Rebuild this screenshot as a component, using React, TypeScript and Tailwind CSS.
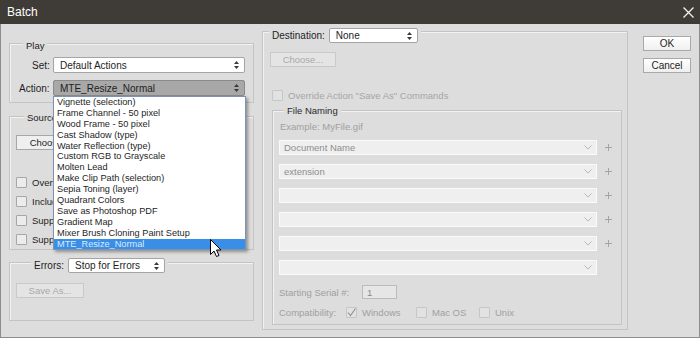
import React from "react";

const actions = [
  "Vignette (selection)",
  "Frame Channel - 50 pixel",
  "Wood Frame - 50 pixel",
  "Cast Shadow (type)",
  "Water Reflection (type)",
  "Custom RGB to Grayscale",
  "Molten Lead",
  "Make Clip Path (selection)",
  "Sepia Toning (layer)",
  "Quadrant Colors",
  "Save as Photoshop PDF",
  "Gradient Map",
  "Mixer Brush Cloning Paint Setup",
  "MTE_Resize_Normal",
];

function UpDown() {
  return (
    <svg width="5" height="8" viewBox="0 0 5 8">
      <path d="M2.5 0 L5 3 H0 Z M0 5 H5 L2.5 8 Z" fill="#3a3a3a" />
    </svg>
  );
}

function Chevron() {
  return (
    <svg width="8" height="5" viewBox="0 0 8 5">
      <path d="M0.5 0.5 L4 4 L7.5 0.5" stroke="#b8b8b8" fill="none" />
    </svg>
  );
}

function Plus() {
  return (
    <svg width="7" height="7" viewBox="0 0 7 7">
      <path d="M3.5 0 V7 M0 3.5 H7" stroke="#a4a4a4" />
    </svg>
  );
}

function Group({
  legend,
  legendClass,
  className,
  children,
}: {
  legend: React.ReactNode;
  legendClass: string;
  className: string;
  children?: React.ReactNode;
}) {
  return (
    <div className={`border border-[#c4c4c4] shadow-[inset_1px_1px_0_#f2f2f2] ${className}`}>
      <div className={`flex w-fit items-center gap-[4px] bg-[#dddddd] px-[3px] ${legendClass}`}>{legend}</div>
      {children}
    </div>
  );
}

function Select({ text, className }: { text: string; className: string }) {
  return (
    <div
      className={`flex items-center justify-between rounded-[2px] border border-[#a4a4a4] bg-white pl-[6px] pr-[5px] text-[10px] ${className}`}
    >
      <span>{text}</span>
      <UpDown />
    </div>
  );
}

function Box({ dim }: { dim?: boolean }) {
  return (
    <div
      className={`h-[11px] w-[11px] shrink-0 rounded-[1px] border ${dim ? "border-[#c6c6c6] bg-[#e2e2e2]" : "border-[#a6a6a6] bg-[#ececec]"}`}
    />
  );
}

function DimButton({ text, className }: { text: string; className: string }) {
  return (
    <div
      className={`flex h-[15px] items-center justify-center border border-[#c9c9c9] bg-[#e4e4e4] text-[#a9a9a9] ${className}`}
    >
      {text}
    </div>
  );
}

function NameRow({ text, plus }: { text: string; plus: boolean }) {
  return (
    <div className="flex items-center">
      <div className="flex h-[15px] w-[318px] items-center justify-between border border-[#fafafa] bg-[#efefef] pl-[4px] pr-[4px] text-[#8e8e8e]">
        <span>{text}</span>
        <Chevron />
      </div>
      {plus && (
        <div className="ml-[8px] flex">
          <Plus />
        </div>
      )}
    </div>
  );
}

export default function App() {
  return (
    <div className="flex h-[338px] w-[700px] flex-col overflow-hidden bg-[#dddddd] font-['Liberation_Sans',Arial,sans-serif] text-[9.5px] leading-[11px] text-[#1e1e1e]">
      {/* title bar */}
      <div className="flex h-[24px] shrink-0 items-center justify-between bg-[#3f3c38] pl-[7px] pr-[6px] text-[12px] text-white">
        <span>Batch</span>
        <svg width="11" height="11" viewBox="0 0 11 11">
          <path d="M0.5 0.5 L10.5 10.5 M10.5 0.5 L0.5 10.5" stroke="#f2f2f2" strokeWidth="1.3" />
        </svg>
      </div>

      <div className="flex flex-1 items-start border-x border-b border-[#8d8d8d]">
        {/* left column */}
        <div className="ml-[8px] mt-[19px] flex w-[245px] flex-col">
          <Group legend={<span>Play</span>} legendClass="-mt-[4px] ml-[13px]" className="pb-[6px]">
            <div className="mt-[6px] flex items-center pl-[22px] pr-[8px]">
              <span className="text-[10px]">Set:</span>
              <Select text="Default Actions" className="ml-auto h-[16px] w-[192px]" />
            </div>
            <div className="mt-[7px] flex items-center pl-[9px] pr-[8px]">
              <span className="text-[10px]">Action:</span>
              <div className="relative ml-auto w-[192px]">
                <div className="flex h-[16px] items-center justify-between rounded-[2px] border border-[#8a8a8a] bg-[#a8a8a8] pl-[6px] pr-[5px] text-[10px]">
                  <span>MTE_Resize_Normal</span>
                  <UpDown />
                </div>
                {/* open action list */}
                <div className="absolute left-0 top-full z-10 w-[193px] border border-[#7d93b3] bg-white shadow-[2px_2px_3px_rgba(0,0,0,0.35)]">
                  {actions.map((a, i) => (
                    <div
                      key={a}
                      className={`h-[10.9px] whitespace-nowrap pl-[3px] text-[9.2px] leading-[10.9px] ${
                        i === actions.length - 1 ? "bg-[#3a8ee6] text-[#d6ebff]" : "text-[#1e1e1e]"
                      }`}
                    >
                      {a}
                    </div>
                  ))}
                  <svg className="absolute left-[156px] top-[142px]" width="12" height="19" viewBox="0 0 12 19">
                    <path d="M0.5 0.5 V15.5 L4 12 L6.5 17.5 L9 16.5 L6.5 11 H11 Z" fill="white" stroke="black" />
                  </svg>
                </div>
              </div>
            </div>
          </Group>

          <Group legend={<span>Source</span>} legendClass="-mt-[5px] ml-[14px]" className="mt-[13px] pb-[4px]">
            <div className="ml-[6px] mt-[12px] flex h-[15px] w-[68px] items-center justify-center border border-[#a8a8a8] bg-[#efefef]">
              Choose...
            </div>
            <div className="ml-[6px] mt-[26px] flex flex-col gap-[7px]">
              {[
                "Override Action \u201COpen\u201D Commands",
                "Include All Subfolders",
                "Suppress File Open Options Dialogs",
                "Suppress Color Profile Warnings",
              ].map((t) => (
                <div key={t} className="flex h-[12px] items-center gap-[5px] whitespace-nowrap">
                  <Box />
                  <span>{t}</span>
                </div>
              ))}
            </div>
          </Group>

          <Group
            legend={
              <>
                <span className="text-[10px]">Errors:</span>
                <Select text="Stop for Errors" className="h-[15px] w-[97px]" />
              </>
            }
            legendClass="-mt-[5px] ml-[21px]"
            className="mt-[12px] pb-[22px]"
          >
            <DimButton text="Save As..." className="ml-[6px] mt-[10px] w-[68px]" />
          </Group>
        </div>

        {/* destination */}
        <Group
          legend={
            <>
              <span className="text-[10px]">Destination:</span>
              <Select text="None" className="h-[15px] w-[89px]" />
            </>
          }
          legendClass="-mt-[4px] ml-[6px]"
          className="ml-[8px] mt-[7px] w-[366px] pb-[4px]"
        >
          <DimButton text="Choose..." className="ml-[7px] mt-[9px] w-[66px]" />
          <div className="ml-[9px] mt-[23px] flex h-[11px] items-center gap-[5px] text-[#a6a6a6]">
            <Box dim />
            <span>Override Action &quot;Save As&quot; Commands</span>
          </div>
          <Group
            legend={<span className="text-[#2a2a2a]">File Naming</span>}
            legendClass="-mt-[6px] ml-[11px]"
            className="ml-[9px] mt-[9px] w-[350px] pb-[6px] text-[#8e8e8e]"
          >
            <div className="ml-[7px] mt-[5px] text-[#a0a0a0]">Example: MyFile.gif</div>
            <div className="ml-[6px] mt-[8px] flex flex-col gap-[9px]">
              <NameRow text="Document Name" plus />
              <NameRow text="extension" plus />
              <NameRow text="" plus />
              <NameRow text="" plus />
              <NameRow text="" plus />
              <NameRow text="" plus={false} />
            </div>
            <div className="ml-[6px] mt-[10px] flex items-center text-[#a0a0a0]">
              <span className="w-[83px]">Starting Serial #:</span>
              <div className="flex h-[14px] w-[35px] items-center border border-[#bcbcbc] bg-[#e6e6e6] pl-[4px] text-[#8a8a8a]">
                1
              </div>
            </div>
            <div className="ml-[6px] mt-[7px] flex h-[12px] items-center text-[#a0a0a0]">
              <span className="w-[67px]">Compatibility:</span>
              <div className="relative">
                <Box dim />
                <svg className="absolute left-[1px] top-[1px]" width="9" height="9" viewBox="0 0 9 9">
                  <path d="M1 4.5 L3.5 7.5 L8.5 0.5" stroke="#909090" fill="none" strokeWidth="1.1" />
                </svg>
              </div>
              <span className="ml-[5px] w-[54px]">Windows</span>
              <Box dim />
              <span className="ml-[5px] w-[47px]">Mac OS</span>
              <Box dim />
              <span className="ml-[5px]">Unix</span>
            </div>
          </Group>
        </Group>

        {/* buttons */}
        <div className="ml-[15px] mt-[12px] flex w-[48px] flex-col gap-[7px] text-[10px]">
          <div className="flex h-[15px] items-center justify-center border border-[#a9a9a9] bg-gradient-to-b from-white to-[#efefef]">
            OK
          </div>
          <div className="flex h-[15px] items-center justify-center border border-[#a9a9a9] bg-gradient-to-b from-white to-[#efefef]">
            Cancel
          </div>
        </div>
      </div>
    </div>
  );
}
